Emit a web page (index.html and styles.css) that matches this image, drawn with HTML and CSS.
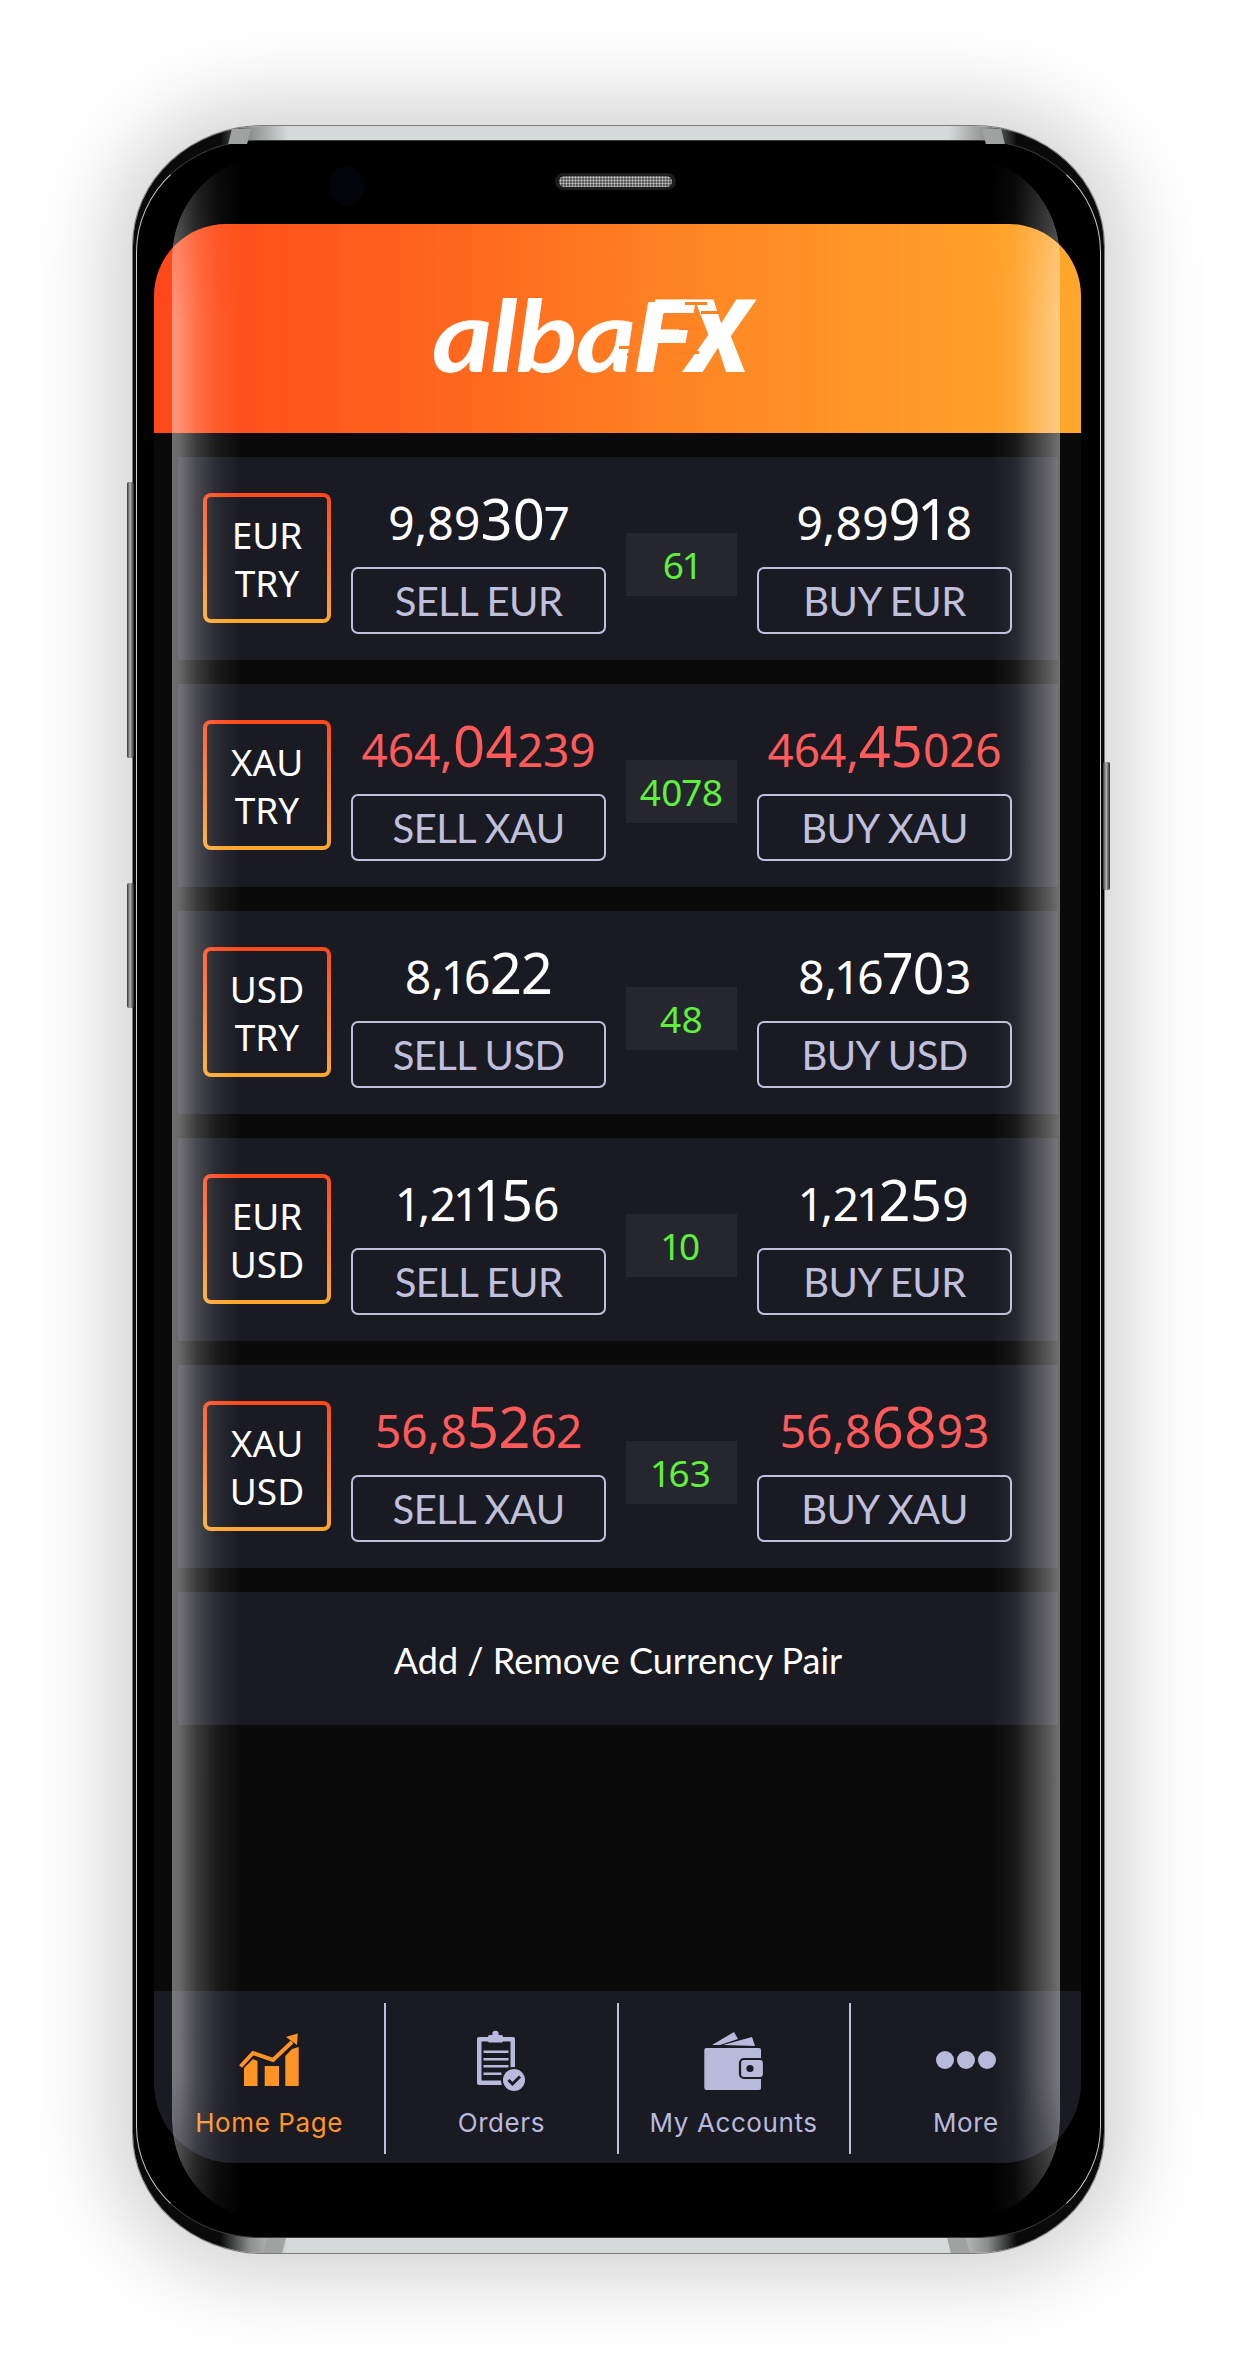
FILE: index.html
```html
<!DOCTYPE html>
<html lang="en">
<head>
<meta charset="utf-8">
<title>albaFX</title>
<link rel="stylesheet" href="styles.css">
</head>
<body>
<div class="page">
  <div class="phone">
    <span class="side side-l1"></span>
    <span class="side side-l2"></span>
    <span class="side side-r"></span>
    <div class="bezel"></div>
    <span class="tab tab-tl"></span><span class="tab tab-tr"></span><span class="tab tab-bl"></span><span class="tab tab-br"></span>
    <span class="camera"></span>
    <span class="speaker"><span class="mesh"></span></span>
    <div class="screen">
      <header class="header">
        <div class="logo">
          <span class="logo-alba">alba</span><span class="logo-fx">FX</span>
          <svg class="logo-lines" viewBox="0 0 120 76" aria-hidden="true">
            <g fill="#ff8022">
              <rect x="0" y="6" width="28" height="3"/><rect x="2" y="26" width="14" height="3"/>
              <rect x="-8" y="53" width="18" height="3"/><rect x="0" y="60" width="8" height="3"/>
              <rect x="58" y="9" width="22" height="3"/><rect x="74" y="18" width="18" height="3"/>
              <rect x="52" y="34" width="22" height="3"/><rect x="46" y="58" width="26" height="3"/>
            </g>
          </svg>
        </div>
      </header>
      <main class="list">
        <section class="row">
          <div class="tile"><span>EUR</span><span>TRY</span></div>
          <div class="side-col"><div class="price">9,89<b>30</b>7</div><button class="trade">SELL EUR</button></div>
          <div class="spread">61</div>
          <div class="side-col"><div class="price">9,89<b>91</b>8</div><button class="trade">BUY EUR</button></div>
        </section>
        <section class="row">
          <div class="tile"><span>XAU</span><span>TRY</span></div>
          <div class="side-col"><div class="price down">464,<b>04</b>239</div><button class="trade">SELL XAU</button></div>
          <div class="spread">4078</div>
          <div class="side-col"><div class="price down">464,<b>45</b>026</div><button class="trade">BUY XAU</button></div>
        </section>
        <section class="row">
          <div class="tile"><span>USD</span><span>TRY</span></div>
          <div class="side-col"><div class="price">8,16<b>22</b></div><button class="trade">SELL USD</button></div>
          <div class="spread">48</div>
          <div class="side-col"><div class="price">8,16<b>70</b>3</div><button class="trade">BUY USD</button></div>
        </section>
        <section class="row">
          <div class="tile"><span>EUR</span><span>USD</span></div>
          <div class="side-col"><div class="price">1,21<b>15</b>6</div><button class="trade">SELL EUR</button></div>
          <div class="spread">10</div>
          <div class="side-col"><div class="price">1,21<b>25</b>9</div><button class="trade">BUY EUR</button></div>
        </section>
        <section class="row">
          <div class="tile"><span>XAU</span><span>USD</span></div>
          <div class="side-col"><div class="price down">56,8<b>52</b>62</div><button class="trade">SELL XAU</button></div>
          <div class="spread">163</div>
          <div class="side-col"><div class="price down">56,8<b>68</b>93</div><button class="trade">BUY XAU</button></div>
        </section>
        <section class="add">Add / Remove Currency Pair</section>
      </main>
      <nav class="nav">
        <a class="item active">
          <svg class="icon" width="60" height="56" viewBox="0 0 60 56" aria-hidden="true">
            <g fill="#ff9426">
              <polygon points="5,53 5,35 14,26 18.5,28 18.5,53"/>
              <rect x="25.7" y="33" width="14.3" height="20"/>
              <polygon points="46.3,53 46.3,23 53,16 59.7,14 59.7,53"/>
              <polygon points="47,4 58.8,0.5 58,12"/>
            </g>
            <polyline points="1.5,33.5 14,20 34,27 53,9" fill="none" stroke="#ff9426" stroke-width="4"/>
          </svg>
          <span class="label">Home Page</span>
        </a>
        <a class="item">
          <svg class="icon" width="52" height="62" viewBox="0 0 52 62" aria-hidden="true">
            <rect x="2" y="7" width="38" height="48" rx="2" fill="#b9b9db"/>
            <rect x="6.5" y="11.5" width="29" height="39" fill="#1a1a23"/>
            <circle cx="20.5" cy="4" r="3.2" fill="#b9b9db"/>
            <rect x="13" y="5" width="15" height="7.5" rx="1.5" fill="#b9b9db"/>
            <g fill="#b9b9db">
              <rect x="8.5" y="20.5" width="25" height="2.5"/><rect x="8.5" y="28" width="25" height="2.5"/>
              <rect x="8.5" y="35" width="25" height="2.5"/><rect x="8.5" y="42.5" width="18" height="2.5"/>
            </g>
            <circle cx="39" cy="50" r="13" fill="#1a1a23"/>
            <circle cx="39" cy="50" r="11" fill="#b9b9db"/>
            <polyline points="33.5,50 37.5,54 45,46.5" fill="none" stroke="#1a1a23" stroke-width="3"/>
          </svg>
          <span class="label">Orders</span>
        </a>
        <a class="item">
          <svg class="icon" width="62" height="60" viewBox="0 0 62 60" aria-hidden="true">
            <g fill="#b9b9db">
              <polygon points="9,14 31,1 35,8 17,14"/>
              <polygon points="20,14 49,6 52,15"/>
              <rect x="1.3" y="17" width="56.7" height="42" rx="2"/>
            </g>
            <rect x="37" y="28" width="24" height="19" rx="4" fill="#b9b9db" stroke="#1a1a23" stroke-width="2.2"/>
            <circle cx="47" cy="37.5" r="3.6" fill="#1a1a23"/>
          </svg>
          <span class="label">My Accounts</span>
        </a>
        <a class="item">
          <svg class="icon icon-dots" width="60" height="62" viewBox="0 0 60 62" aria-hidden="true">
            <g fill="#b9b9db">
              <circle cx="9" cy="30" r="9"/><circle cx="30" cy="30" r="9"/><circle cx="51" cy="30" r="9"/>
            </g>
          </svg>
          <span class="label">More</span>
        </a>
      </nav>
    </div>
    <div class="sheen"></div>
  </div>
</div>
</body>
</html>
```

FILE: styles.css
```css
* { box-sizing: border-box; }
html, body { margin: 0; background: #fff; }
.page {
  width: 1238px;
  height: 2380px;
  padding: 126px 0 0 133px;
  overflow: hidden;
  font-family: "Noto Sans", "Open Sans", sans-serif;
}
.phone {
  position: relative;
  width: 971px;
  height: 2127px;
  padding: 98px 23px 0 21px;
  border-radius: 130px / 120px;
  background: linear-gradient(90deg, #0a0a0a 0, #0a0a0a 9%, #8c8e8e 12%, #d6d9d9 16%, #d6d9d9 84%, #8c8e8e 88%, #0a0a0a 91%, #0a0a0a 100%);
  box-shadow: 0 0 0 1px #7d7d7d, 0 0 75px 28px rgba(0, 0, 0, .17);
}
.bezel {
  position: absolute;
  top: 14px; left: 3px; right: 3px; bottom: 15px;
  border-radius: 122px / 112px;
  background: #000;
  border: 1.5px solid #cfcfcf;
  border-top-color: #3a3a3a;
  border-bottom-color: #3a3a3a;
}
.side {
  position: absolute;
  width: 7px;
  background: linear-gradient(90deg, #333, #b5b5b5 45%, #222);
  border-radius: 2px;
}
.side-l1 { left: -6px; top: 356px; height: 276px; }
.side-l2 { left: -6px; top: 757px; height: 125px; }
.side-r { right: -6px; top: 636px; height: 128px; }
.tab { position: absolute; width: 19px; height: 15px; background: #a0a2a2; }
.tab-tl { left: 97px; top: 3px; transform: skewX(-14deg); }
.tab-tr { right: 101px; top: 3px; transform: skewX(14deg); }
.tab-bl { left: 132px; bottom: 0; transform: skewX(-14deg); }
.tab-br { right: 136px; bottom: 0; transform: skewX(14deg); }
.camera {
  position: absolute;
  left: 196px; top: 40px;
  width: 36px; height: 40px;
  border-radius: 50%;
  background: #03030a;
}
.speaker {
  position: absolute;
  left: 422px; top: 47px;
  width: 121px; height: 17px;
  padding: 3px 4px;
  border-radius: 9px;
  background: #1c1c1c;
}
.mesh {
  display: block;
  height: 100%;
  border-radius: 6px;
  background: #777 radial-gradient(circle, #c8c8c8 35%, #5a5a5a 60%) 0 0 / 3px 3px;
}
.screen {
  position: relative;
  display: flex;
  flex-direction: column;
  height: 1939px;
  border-radius: 72px 72px 80px 80px;
  overflow: hidden;
  background: #0a0a0a;
}
.header {
  flex: none;
  display: flex;
  align-items: center;
  height: 209px;
  padding-left: 278px;
  background: linear-gradient(90deg, #ff481b 0, #ff6a1e 35%, #ff8a25 62%, #ffa82b 100%);
}
.logo {
  position: relative;
  display: flex;
  align-items: baseline;
  height: 80px;
  line-height: 80px;
  margin-top: 9px;
  color: #fff;
}
.logo-alba {
  display: inline-block;
  margin-right: 30px;
  transform: scaleX(1.16);
  transform-origin: left;
  font: italic 700 100px/80px Lato, sans-serif;
  letter-spacing: -2px;
}
.logo-fx {
  font: italic 900 102px/80px Roboto, sans-serif;
  letter-spacing: -3px;
}
.logo-lines {
  position: absolute;
  right: 0; top: 0;
  width: 120px; height: 76px;
  overflow: visible;
}
.list {
  flex: 1;
  display: flex;
  flex-direction: column;
  gap: 24px;
  padding: 24px 23px 0 24px;
}
.row {
  flex: none;
  display: flex;
  align-items: flex-start;
  gap: 20px;
  height: 203px;
  padding: 36px 0 0 25px;
  background: #1a1a23;
}
.tile {
  flex: none;
  display: flex;
  flex-direction: column;
  align-items: center;
  justify-content: center;
  width: 128px;
  height: 130px;
  padding-top: 2px;
  border: 4px solid transparent;
  border-radius: 8px;
  background: linear-gradient(#1a1a23, #1a1a23) padding-box, linear-gradient(180deg, #ff481b, #ffa82b) border-box;
  color: #fff;
  font-size: 37px;
  line-height: 48px;
}
.side-col {
  flex: none;
  display: flex;
  flex-direction: column;
  align-items: center;
  width: 255px;
}
.price {
  height: 54px;
  margin: -2px 0 22px;
  color: #fff;
  font-size: 46px;
  font-variant-numeric: proportional-nums;
  line-height: 54px;
  white-space: nowrap;
}
.price b { font-size: 56px; font-weight: 400; }
.price.down { color: #ff5a5a; }
.trade {
  width: 255px;
  height: 67px;
  padding: 0;
  border: 2.5px solid #c0c0dc;
  border-radius: 7px;
  background: transparent;
  color: #c0c0dc;
  font: 400 40px/1 Lato, sans-serif;
  letter-spacing: -.6px;
}
.spread {
  flex: none;
  width: 111px;
  height: 63px;
  margin-top: 40px;
  background: #26262f;
  color: #5ff03c;
  font-size: 37px;
  font-variant-numeric: proportional-nums;
  line-height: 63px;
  text-align: center;
}
.add {
  flex: none;
  height: 133px;
  background: #1a1a23;
  color: #fff;
  font: 400 36px/136px Lato, sans-serif;
  text-align: center;
}
.nav {
  flex: none;
  display: flex;
  height: 172px;
  padding: 12px 0 9px;
  background: #1a1a23;
}
.item {
  flex: 1;
  display: flex;
  flex-direction: column;
  align-items: center;
  padding-top: 27px;
  border-right: 2px solid #c0c0dc;
  color: #b9b9db;
}
.item:last-child { border-right: 0; }
.item.active { color: #ff9426; }
.icon { display: block; height: 62px; }
.label {
  margin-top: 15px;
  font: 400 26px/32px Inter, sans-serif;
  letter-spacing: .6px;
}
.sheen {
  position: absolute;
  top: 32px; left: 39px; right: 44px; bottom: 33px;
  border-radius: 95px / 100px;
  background: linear-gradient(90deg, rgba(255,255,255,.42) 0, rgba(255,255,255,.38) 8px, rgba(255,255,255,.2) 25px, rgba(255,255,255,.07) 45px, rgba(255,255,255,0) 70px, rgba(255,255,255,0) calc(100% - 70px), rgba(255,255,255,.06) calc(100% - 45px), rgba(255,255,255,.22) calc(100% - 25px), rgba(255,255,255,.42) 100%);
  -webkit-mask-image: linear-gradient(180deg, rgba(0,0,0,.55) 0, #000 8%, #000 93%, rgba(0,0,0,.55) 100%);
  mask-image: linear-gradient(180deg, rgba(0,0,0,.55) 0, #000 8%, #000 93%, rgba(0,0,0,.55) 100%);
}
```
